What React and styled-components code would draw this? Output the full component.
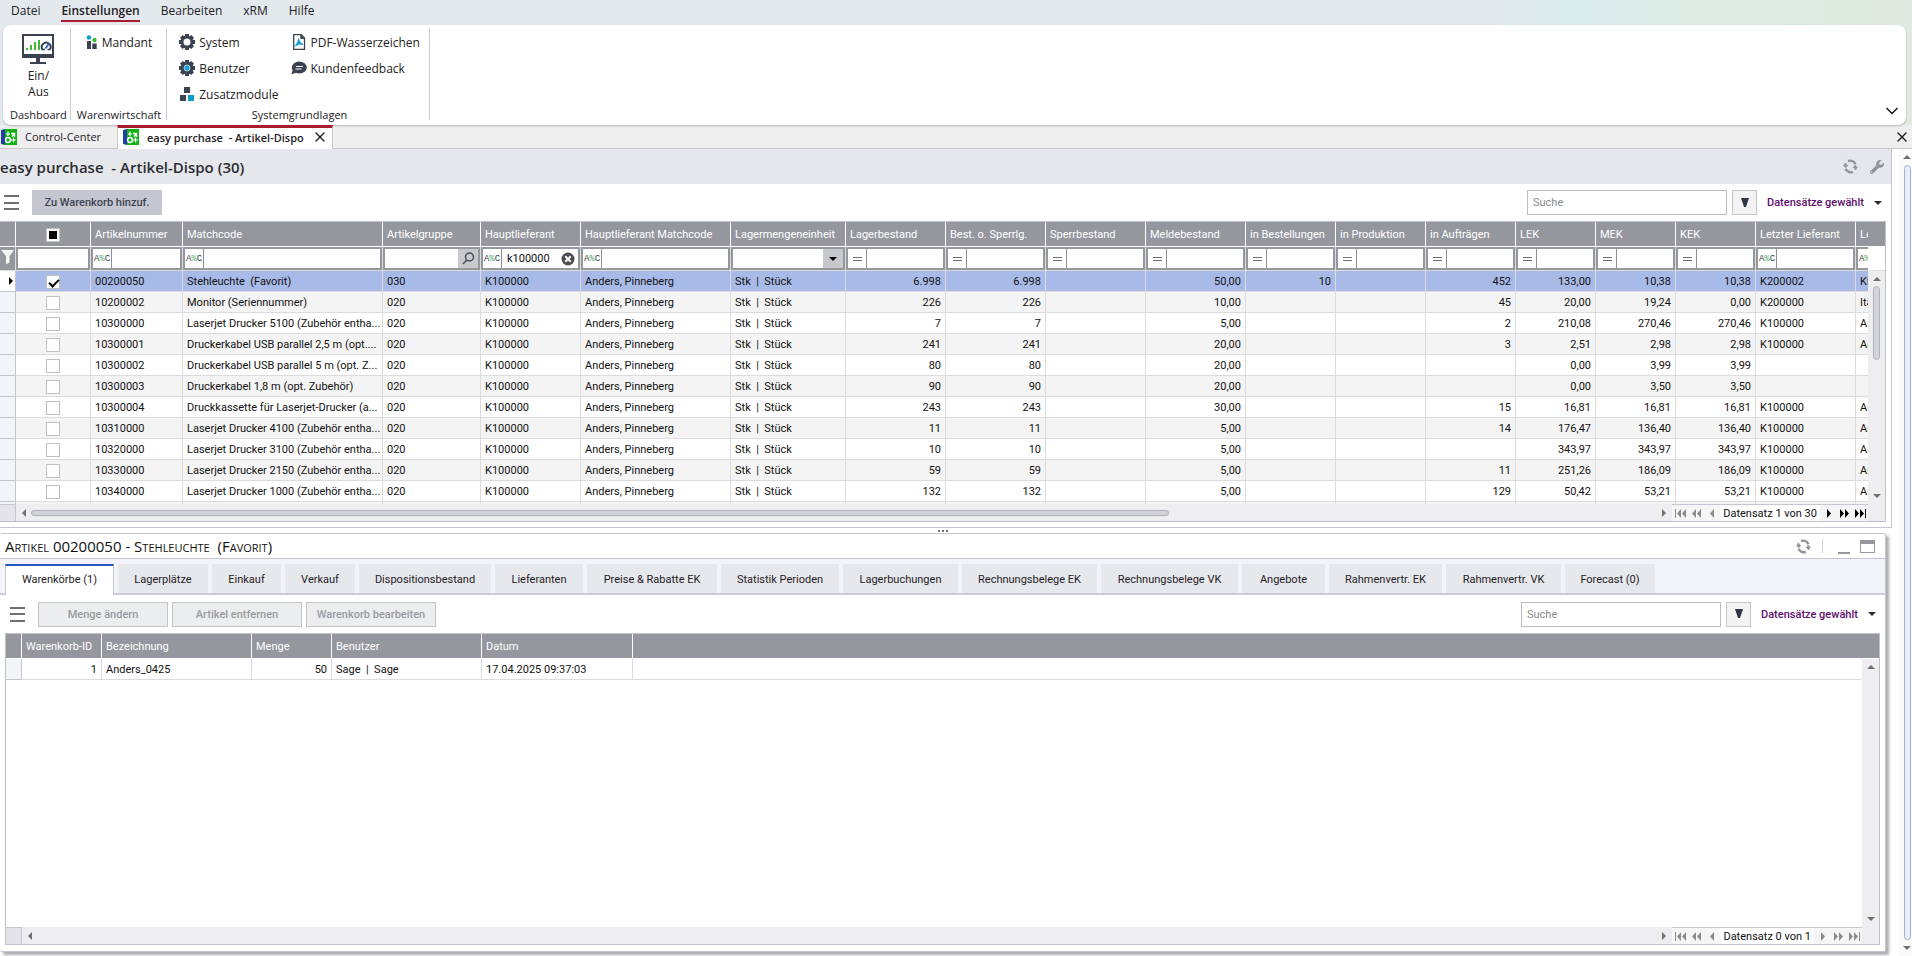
import React, { useEffect, useRef } from "react"
import styled, { createGlobalStyle, css } from "styled-components"
import { ChevronDown, X } from "lucide-react"
import { FaWrench } from "react-icons/fa"

const GlobalStyle = createGlobalStyle`
  * {
    box-sizing: border-box;
  }
  body {
    margin: 0;
    background: #ffffff;
    color: #111111;
    font-family: Roboto, "Liberation Sans", sans-serif;
    font-size: 11px;
  }
  button,
  input,
  select {
    font: inherit;
    color: inherit;
    margin: 0;
    padding: 0;
    border: none;
    border-radius: 0;
    background: transparent;
  }
`

const AppStyle = styled.div`
  display: flex;
  flex-direction: column;
  min-height: 100vh;
  overflow: hidden;
`

/* ---------- menu + ribbon ---------- */

const TopArea = styled.header`
  font-family: "Open Sans", "Noto Sans", sans-serif;
  font-size: 12px;
  color: #1e2126;
  background: linear-gradient(
    90deg,
    #e3e9ed 0%,
    #e2e9ec 78%,
    #dcedee 82%,
    #deede6 88%,
    #e0ece1 95%,
    #e1eae0 100%
  );
`

const MenuBar = styled.nav`
  display: flex;
  height: 25px;
  padding: 0 11px;
  gap: 21px;
  align-items: flex-start;
`

const MenuItem = styled.a`
  height: 22px;
  line-height: 22px;
  color: #1e2126;
  text-decoration: none;
  font-weight: ${(p) => (p.$active ? 600 : 400)};
  border-bottom: 2px solid ${(p) => (p.$active ? "#a81c30" : "transparent")};
`

const Ribbon = styled.div`
  position: relative;
  z-index: 1;
  display: flex;
  height: 100px;
  margin: 0 6px 0 3px;
  padding: 4px 0 0;
  background: #ffffff;
  border-radius: 8px;
  box-shadow: 0 1px 2px rgba(0, 0, 0, 0.25);
`

const Group = styled.section`
  display: flex;
  flex-direction: column;
  justify-content: space-between;
  height: 91px;
  padding: ${(p) => p.$pad};
  border-right: 1px solid #c9cacd;

  h2 {
    margin: 0;
    font-size: 11px;
    font-weight: 400;
    line-height: 10px;
    text-align: center;
  }
`

const GroupItems = styled.div`
  display: grid;
  grid-auto-flow: column;
  grid-template-rows: 26px 26px 26px;
  justify-content: start;
  column-gap: 12px;
`

const RibbonButton = styled.button`
  display: flex;
  align-items: center;
  gap: 4px;
  padding-left: ${(p) => p.$indent || 0}px;
  white-space: nowrap;
`

const BigButton = styled.button`
  display: flex;
  flex-direction: column;
  align-items: center;
  padding-top: 5px;
  line-height: 16px;

  svg {
    margin-bottom: 3px;
  }
`

const Collapse = styled.button`
  margin: auto 4px 4px auto;
  height: 20px;
`

/* ---------- document tabs ---------- */

const DocTabs = styled.nav`
  display: flex;
  align-items: stretch;
  height: 24px;
  background: #efefef;
  border-bottom: 1px solid #c9c9cc;
  font-family: "Open Sans", "Noto Sans", sans-serif;
  font-size: 11px;
  color: #1e2126;
`

const DocTab = styled.div`
  display: flex;
  align-items: center;
  width: ${(p) => p.$width}px;
  padding-left: ${(p) => (p.$active ? 5 : 1)}px;
  ${(p) =>
    p.$active &&
    css`
      position: relative;
      z-index: 2;
      margin-bottom: -1px;
      padding-bottom: 3px;
      background: #ffffff;
      border: 1px solid #c9c9cc;
      border-top: 3px solid #a81c30;
      border-bottom: none;
      font-weight: 600;
    `}

  > a {
    margin-left: 8px;
    color: inherit;
    text-decoration: none;
    white-space: pre;
  }
  > button {
    margin: 0 4px 0 auto;
    height: 16px;
  }
`

const CloseAll = styled.button`
  display: flex;
  align-items: center;
  margin: 0 2px 0 auto;
`

/* ---------- page ---------- */

const Page = styled.main`
  display: flex;
  flex: 1;
`

const PageContent = styled.div`
  display: flex;
  flex-direction: column;
  flex: 1;
  min-width: 0;
`

const MainPanel = styled.section`
  margin-right: 7px;
  border-right: 1px solid #c5c6d0;
  border-bottom: 1px solid #c5c6d0;
  padding-bottom: 5px;
`

const TitleBand = styled.div`
  display: flex;
  align-items: center;
  height: 35px;
  padding-right: 7px;
  gap: 12px;
  background: #e6e7eb;

  h1 {
    flex: 1;
    margin: 0;
    font-family: "Open Sans", "Noto Sans", sans-serif;
    font-size: 15px;
    font-weight: 600;
    color: #2a2d34;
    white-space: pre;
  }
`

const IconButton = styled.button`
  display: flex;
  align-items: center;
  color: #939498;
`

const Toolbar = styled.div`
  display: flex;
  align-items: center;
  height: ${(p) => p.$height}px;
  padding: 0 9px 0 ${(p) => p.$left}px;
`

const Burger = styled.button`
  width: 15px;
  height: 15px;
  margin-right: 13px;
  border-top: 2px solid #6f7074;
  border-bottom: 2px solid #6f7074;
  background: linear-gradient(#6f7074, #6f7074) center / 100% 2px no-repeat;
`

const ActionButton = styled.button`
  width: 130px;
  height: 25px;
  margin-right: 4px;
  font-weight: 500;
  white-space: nowrap;
  color: #3d4452;
  background: #c5c6d0;

  &:disabled {
    color: #9a9ba1;
    background: #ecedef;
    border: 1px solid #c5c5c9;
  }
`

const SearchInput = styled.input`
  width: 200px;
  height: 25px;
  margin-left: auto;
  padding: 0 5px;
  border: 1px solid #bdbdc0;
  background: #ffffff;

  &::placeholder {
    color: #8a8b8f;
    opacity: 1;
  }
`

const FunnelButton = styled.button`
  display: flex;
  align-items: center;
  justify-content: center;
  width: 25px;
  height: 25px;
  margin-left: 5px;
  border: 1px solid #c5c5c9;
  background: #f3f3f4;
`

const RecordsButton = styled.button`
  display: flex;
  align-items: center;
  justify-content: space-between;
  width: 115px;
  margin-left: 10px;
  font-weight: 500;
  color: #5c0f6b;
  white-space: nowrap;
`

/* ---------- grid ---------- */

const GridFrame = styled.div`
  display: flex;
  flex-direction: column;
  flex: ${(p) => (p.$grow ? 1 : "none")};
  margin: ${(p) => (p.$grow ? "0 5px 6px" : "0 5px 0 0")};
  border: 1px solid #c0c1c6;
  border-left-width: ${(p) => (p.$grow ? 1 : 0)}px;
`

const GridBody = styled.div`
  display: flex;
  flex: ${(p) => (p.$height ? "none" : 1)};
  height: ${(p) => (p.$height ? p.$height + "px" : "auto")};
  overflow: hidden;
`

const TableClip = styled.div`
  flex: 1;
  min-width: 0;
  overflow: hidden;
`

const Table = styled.table`
  table-layout: fixed;
  width: ${(p) => p.$width};
  border-collapse: separate;
  border-spacing: 0;

  th,
  td {
    padding: 1px 4px 0;
    overflow: hidden;
    text-align: left;
    white-space: pre;
    font-weight: 400;
    border-right: 1px solid #dcdcde;
    border-bottom: 1px solid #dcdcde;
  }
`

const HeadRow = styled.tr`
  height: 25px;

  th {
    color: #ffffff;
    background: #95979f;
    border-color: #ffffff;
  }
  th:last-child {
    border-right-color: ${(p) => (p.$fill ? "#95979f" : "#ffffff")};
  }
`

const FilterRow = styled.tr`
  height: 24px;

  td {
    padding: 0 2px;
    background: #95979f;
    border-color: #dcdcde;
  }
  td:first-child {
    padding: 0;
  }
`

const FilterBox = styled.div`
  display: flex;
  height: 19px;
  background: #ffffff;
  overflow: hidden;

  input,
  select {
    flex: 1;
    width: 20px;
    min-width: 0;
    padding-left: 5px;
    appearance: none;
    outline: none;
  }
`

const Operator = styled.button`
  display: flex;
  flex: none;
  align-items: center;
  justify-content: center;
  width: 19px;
  border-right: 1px solid #8d8f97;
  font-family: "Liberation Mono", monospace;
  font-size: 9px;
  color: #3f4148;

  i {
    font-style: normal;
    color: #4fae6a;
  }
`

const FieldButton = styled.button`
  display: flex;
  flex: none;
  align-items: center;
  justify-content: center;
  width: 20px;
  background: ${(p) => (p.$plain ? "#ffffff" : "#c8c9cc")};
`

const DataRow = styled.tr`
  height: 21px;

  td {
    background: ${(p) =>
      p.$selected ? "#a8bbe8" : p.$alt ? "#f4f4f4" : "#ffffff"};
  }
  td:first-child {
    background: ${(p) => (p.$selected ? "#ffffff" : "#f4f5f9")};
    border-color: #c5c6d0;
  }
  td:last-child {
    border-right-color: ${(p) => (p.$open ? "transparent" : "#dcdcde")};
  }
`

const Cell = styled.td`
  && {
    text-align: ${(p) => p.$align || "left"};
  }
`

const CheckHead = styled.th`
  && {
    text-align: center;
  }
`

const Check = styled.input`
  && {
    display: block;
    position: relative;
    appearance: none;
    width: 14px;
    height: 14px;
    margin: 0 auto;
    border: 1px solid #bfc0c4;
    background: #ffffff;
  }
  &:checked::after {
    content: "";
    position: absolute;
    left: 4px;
    top: 1px;
    width: 4px;
    height: 8px;
    border: solid #000000;
    border-width: 0 2px 2px 0;
    transform: rotate(45deg);
  }
  &:indeterminate::after {
    content: "";
    position: absolute;
    inset: 2px;
    background: #000000;
  }
`

const Gutter = styled.div`
  display: flex;
  flex-direction: column;
  width: 17px;
`

const GutterHead = styled.div`
  height: 25px;
  background: #95979f;
  border-bottom: 1px solid #ffffff;
`

const GutterFilter = styled.div`
  height: 24px;
  border-bottom: 1px solid #dcdcde;
`

const VScroll = styled.div`
  display: flex;
  flex-direction: column;
  align-items: center;
  justify-content: space-between;
  flex: 1;
  padding: 5px 0;
  background: #eeeef0;
`

const VThumb = styled.div`
  width: 7px;
  height: 74px;
  margin: 4px 0 auto;
  border: 1px solid #b0b2b9;
  border-radius: 4px;
  background: #d3d4d9;
`

const HScroll = styled.div`
  display: flex;
  align-items: center;
  height: 17px;
  background: #eeeef0;
`

const Corner = styled.div`
  align-self: stretch;
  width: 16px;
  margin-right: 5px;
  background: #e3e3e9;
  border-top: 1px solid #c5c6d0;
  border-right: 1px solid #c5c6d0;
`

const HTrack = styled.div`
  flex: 1;
  padding: 0 4px;
`

const HThumb = styled.div`
  width: 70%;
  height: 6px;
  border: 1px solid #b0b2b9;
  border-radius: 3px;
  background: #d3d4d9;
`

const Pager = styled.div`
  display: flex;
  align-items: stretch;
  align-self: stretch;
  margin: 0 17px 0 5px;
  background: #f5f5f6;
  border-top: 1px solid #c5c6d0;

  button {
    display: flex;
    align-items: center;
    justify-content: center;
    width: 16px;
    color: #000000;
  }
  button:disabled {
    color: #8a8b8f;
  }
  span {
    padding: 0 3px;
    line-height: 17px;
    background: #ffffff;
  }
`

const Splitter = styled.div`
  height: 5px;
  display: flex;
  justify-content: center;
  align-items: center;
  gap: 2px;
  padding-right: 13px;

  i {
    width: 2px;
    height: 2px;
    background: #6f7074;
  }
`

/* ---------- detail panel ---------- */

const DetailPanel = styled.section`
  display: flex;
  flex-direction: column;
  flex: 1;
  margin: 0 13px 4px 0;
  background: #ffffff;
  border: 1px solid #c5c6d0;
  border-left: none;
  border-radius: 2px;
  box-shadow: 3px 3px 3px rgba(90, 90, 100, 0.5);
`

const DetailTitle = styled.div`
  display: flex;
  align-items: center;
  height: 25px;
  padding: 0 10px 0 5px;
  border-bottom: 1px solid #c5c6d0;

  h2 {
    flex: 1;
    margin: 0;
    font-family: "Open Sans", "Noto Sans", sans-serif;
    font-size: 15px;
    line-height: 24px;
    font-weight: 400;
    font-variant: small-caps;
    white-space: pre;
  }
`

const Divider = styled.i`
  width: 1px;
  height: 14px;
  margin: 0 15px 0 11px;
  background: #d0d0d4;
`

const MinButton = styled.button`
  width: 12px;
  height: 15px;
  margin-right: 10px;
  border-bottom: 2px solid #97989c;
`

const MaxButton = styled.button`
  width: 15px;
  height: 13px;
  border: 1px solid #97989c;
  border-top-width: 4px;
`

const TabStrip = styled.div`
  display: flex;
  gap: 4px;
  height: 36px;
  padding: 5px 5px 0;
  background: #f3f4f9;
  border-bottom: 2px solid #cccdd6;
`

const Tab = styled.button`
  flex: 0 1 ${(p) => p.$width}px;
  min-width: 0;
  height: 29px;
  padding-top: 2px;
  white-space: nowrap;
  color: #1e2126;
  background: #e7e8ec;
  ${(p) =>
    p.$active &&
    css`
      height: 31px;
      padding: 0 0 2px;
      background: #ffffff;
      border-top: 2px solid #2457c5;
      border-right: 1px solid #c5c6d0;
      border-left: 1px solid #c5c6d0;
    `}
`

const PageScroll = styled.div`
  display: flex;
  flex-direction: column;
  align-items: center;
  width: 13px;
  padding: 5px 0 5px 3px;
  gap: 5px;
  background: #fafafb;

  i {
    flex: 1;
    width: 7px;
    border: 1px solid #aab0c4;
    border-radius: 4px;
    background: #e6edfc;
  }
`

/* ---------- icons ---------- */

const ARROWS = {
  up: "0,5 4,1 8,5",
  down: "0,1 8,1 4,5",
  left: "5,0 5,8 1,4",
  right: "1,0 5,4 1,8",
}

const Arrow = ({ dir, color = "#6f7074" }) => {
  const flat = dir === "up" || dir === "down"
  return (
    <svg width={flat ? 8 : 6} height={flat ? 6 : 8} aria-hidden="true">
      <polygon points={ARROWS[dir]} fill={color} />
    </svg>
  )
}

const PAGER_SHAPES = {
  first: "M0 0h1v9h-1zM6 0v9L2 4.500zM11 0v9L7 4.500z",
  fastBack: "M5 0v9L1 4.500zM10 0v9L6 4.500z",
  back: "M7 0v9L3 4.500z",
  next: "M4 0v9L8 4.500z",
  fastNext: "M1 0v9L5 4.500zM6 0v9L10 4.500z",
  last: "M0 0v9L4 4.500zM5 0v9L9 4.500zM10 0h1v9h-1z",
}

const PagerButton = ({ kind, label, disabled }) => (
  <button aria-label={label} disabled={disabled}>
    <svg width="11" height="9" fill="currentColor">
      <path d={PAGER_SHAPES[kind]} />
    </svg>
  </button>
)

const Gear = ({ user }) => (
  <svg width="16" height="16" viewBox="0 0 16 16">
    {[0, 45, 90, 135, 180, 225, 270, 315].map((a) => (
      <rect
        key={a}
        x="6"
        y="0"
        width="4"
        height="4"
        fill="#3c4350"
        transform={`rotate(${a} 8 8)`}
      />
    ))}
    <circle cx="8" cy="8" r="5" fill="#ffffff" stroke="#3c4350" strokeWidth="3" />
    {user && <circle cx="8" cy="8" r="4.500" fill="#3c4350" />}
    {user && <circle cx="8" cy="8" r="3" fill="#1aa0d8" stroke="#c9e6f4" strokeWidth="0.800" />}
  </svg>
)

const Modules = () => (
  <svg width="16" height="16" viewBox="0 0 16 16">
    <path d="M5 1h6v6H5zM1 9h6v6H1z" fill="#3c4350" />
    <path d="M9 9h6v6H9z" fill="#0a9ccc" />
  </svg>
)

const PdfIcon = () => (
  <svg width="16" height="16" viewBox="0 0 16 16">
    <path d="M2.700 .7h7.600l3.200 3.200v11.400H2.700z" fill="#fff" stroke="#3c4350" strokeWidth="1.300" />
    <path d="M9.800.7v3.700h3.700" fill="#3c4350" stroke="#3c4350" />
    <path
      d="M7.600 4.600c.2 2.500.8 4 4.300 5.800-3-.8-5-.5-7.600 1.600 2.300-2 3.200-4.200 3.300-7.400z"
      fill="#1aa0d8"
      stroke="#1aa0d8"
      strokeWidth="1.100"
    />
  </svg>
)

const Speech = () => (
  <svg width="16" height="16" viewBox="0 0 16 16">
    <ellipse cx="8.300" cy="7.500" rx="7.500" ry="6" fill="#3c4350" />
    <path d="M2.200 9L.2 14.300l6-1.800z" fill="#3c4350" />
    <path d="M5 6.500h7M4.500 9h6" stroke="#fff" strokeWidth="1.100" />
  </svg>
)

const Mandant = () => (
  <svg width="12" height="14" viewBox="0 0 12 14">
    <circle cx="3" cy="2.500" r="2.200" fill="#0a9ccc" />
    <circle cx="8.500" cy="5" r="2.200" fill="#3fb92f" />
    <path d="M1 6h4v8H1zM6.300 8.500h4.400V14H6.300z" fill="#3c4350" />
  </svg>
)

const Dashboard = () => (
  <svg width="32" height="31" viewBox="0 0 32 31">
    <path d="M0 0h32v24H0z" fill="#3c4350" />
    <path d="M2 2h28v18H2z" fill="#fff" />
    <path d="M14 24h4v4h6v2H8v-2h6z" fill="#3c4350" />
    <path d="M4 14h2v2H4zM8 11h2v5H8zM12 8h2v8h-2zM16 6h2v10h-2z" fill="#3fb92f" />
    <path d="M20.500 15.500a4.400 4.400 0 1 1 7.400 0" fill="none" stroke="#3c4350" strokeWidth="2" />
    <path d="M23.500 14.500l3.500-5" stroke="#2457c5" strokeWidth="1.600" />
    <path d="M19.500 15.500h3.500M25.500 15.500h3" stroke="#3c4350" strokeWidth="1.400" />
  </svg>
)

const AppLogo = () => (
  <svg width="16" height="16" viewBox="0 0 16 16">
    <path d="M0 1l4-1v16l-4-1z" fill="#1c3fa8" />
    <path d="M4 0h12v16H4z" fill="#12b012" />
    <circle cx="7" cy="11" r="2.400" fill="none" stroke="#fff" strokeWidth="1.500" />
    <path d="M5 5h4M7 2.500v4.500M10 11h5M12.500 8.500v5" stroke="#fff" strokeWidth="1.200" />
    <path d="M10 4.500h3.500V8M13 5l-2 2.500" fill="none" stroke="#fff" strokeWidth="1.400" />
  </svg>
)

const Refresh = () => (
  <svg width="15" height="15" viewBox="0 0 15 15" fill="none" stroke="currentColor" strokeWidth="2.400">
    <path d="M5 2a6 6 0 0 1 7.500 3.200M2.200 7a5.400 5.400 0 0 1 .8-2.600" />
    <path d="M10 13a6 6 0 0 1-7.500-3.200M12.800 8a5.400 5.400 0 0 1-.8 2.600" />
    <path d="M0 6h5.400L2.700 9.200zM15 9H9.600l2.700-3.200z" fill="currentColor" stroke="none" />
  </svg>
)

const FunnelDrop = () => (
  <svg width="10" height="10">
    <path d="M1 0h8L6 9H4z" fill="#2f3746" />
  </svg>
)

const FilterFunnel = () => (
  <svg width="14" height="15" viewBox="0 0 14 15">
    <path d="M1 0h13L9.500 6v6.500l-3.500 2V6z" fill="#f5f5f5" />
  </svg>
)

const Magnifier = () => (
  <svg width="13" height="13" fill="none" stroke="#4a4d55" strokeWidth="1.500">
    <circle cx="7.500" cy="5" r="4" />
    <path d="M4.800 8L1 12" />
  </svg>
)

const Clear = () => (
  <svg width="14" height="14">
    <circle cx="7" cy="7" r="6.500" fill="#4a4d50" />
    <path d="M4.300 4.300l5.400 5.400M9.700 4.300L4.300 9.700" stroke="#fff" strokeWidth="2" />
  </svg>
)

const Equals = () => (
  <svg width="9" height="4" shapeRendering="crispEdges">
    <path d="M0 0h9v1H0zM0 3h9v1H0z" fill="#6f7074" />
  </svg>
)

const RowMarker = () => (
  <svg width="10" height="8">
    <polygon points="5,0 9,4 5,8" fill="#000" />
  </svg>
)

/* ---------- data ---------- */

const columns = [
  { title: "Artikelnummer", width: 92, filter: "text" },
  { title: "Matchcode", width: 200, filter: "text" },
  { title: "Artikelgruppe", width: 98, filter: "lookup" },
  { title: "Hauptlieferant", width: 100, filter: "text", value: "k100000" },
  { title: "Hauptlieferant Matchcode", width: 150, filter: "text" },
  { title: "Lagermengeneinheit", width: 115, filter: "select" },
  { title: "Lagerbestand", width: 100, filter: "number" },
  { title: "Best. o. Sperrlg.", width: 100, filter: "number" },
  { title: "Sperrbestand", width: 100, filter: "number" },
  { title: "Meldebestand", width: 100, filter: "number" },
  { title: "in Bestellungen", width: 90, filter: "number" },
  { title: "in Produktion", width: 90, filter: "number" },
  { title: "in Aufträgen", width: 90, filter: "number" },
  { title: "LEK", width: 80, filter: "number" },
  { title: "MEK", width: 80, filter: "number" },
  { title: "KEK", width: 80, filter: "number" },
  { title: "Letzter Lieferant", width: 100, filter: "text" },
  { title: "Letzter Lieferant Matchcode", width: 150, filter: "text" },
]

const GRID_WIDTH = 91 + columns.reduce((sum, c) => sum + c.width, 0)

const article = (no, name, group, stock, min, ordered, sold, lek, mek, kek, last, lastName) => [
  no,
  name,
  group,
  "K100000",
  "Anders, Pinneberg",
  "Stk  |  Stück",
  stock,
  stock,
  "",
  min,
  ordered,
  "",
  sold,
  lek,
  mek,
  kek,
  last,
  lastName,
]

const A = "Anders, Pinneberg"

const articles = [
  article("00200050", "Stehleuchte  (Favorit)", "030", "6.998", "50,00", "10", "452", "133,00", "10,38", "10,38", "K200002", "Klein, Hamburg"),
  article("10200002", "Monitor (Seriennummer)", "020", "226", "10,00", "", "45", "20,00", "19,24", "0,00", "K200000", "Italo, Mailand"),
  article("10300000", "Laserjet Drucker 5100 (Zubehör entha...", "020", "7", "5,00", "", "2", "210,08", "270,46", "270,46", "K100000", A),
  article("10300001", "Druckerkabel USB parallel 2,5 m (opt....", "020", "241", "20,00", "", "3", "2,51", "2,98", "2,98", "K100000", A),
  article("10300002", "Druckerkabel USB parallel 5 m (opt. Z...", "020", "80", "20,00", "", "", "0,00", "3,99", "3,99", "", ""),
  article("10300003", "Druckerkabel 1,8 m (opt. Zubehör)", "020", "90", "20,00", "", "", "0,00", "3,50", "3,50", "", ""),
  article("10300004", "Druckkassette für Laserjet-Drucker (a...", "020", "243", "30,00", "", "15", "16,81", "16,81", "16,81", "K100000", A),
  article("10310000", "Laserjet Drucker 4100 (Zubehör entha...", "020", "11", "5,00", "", "14", "176,47", "136,40", "136,40", "K100000", A),
  article("10320000", "Laserjet Drucker 3100 (Zubehör entha...", "020", "10", "5,00", "", "", "343,97", "343,97", "343,97", "K100000", A),
  article("10330000", "Laserjet Drucker 2150 (Zubehör entha...", "020", "59", "5,00", "", "11", "251,26", "186,09", "186,09", "K100000", A),
  article("10340000", "Laserjet Drucker 1000 (Zubehör entha...", "020", "132", "5,00", "", "129", "50,42", "53,21", "53,21", "K100000", A),
]

const tabs = [
  ["Warenkörbe (1)", 109],
  ["Lagerplätze", 90],
  ["Einkauf", 69],
  ["Verkauf", 70],
  ["Dispositionsbestand", 132],
  ["Lieferanten", 88],
  ["Preise & Rabatte EK", 130],
  ["Statistik Perioden", 118],
  ["Lagerbuchungen", 115],
  ["Rechnungsbelege EK", 135],
  ["Rechnungsbelege VK", 137],
  ["Angebote", 83],
  ["Rahmenvertr. EK", 113],
  ["Rahmenvertr. VK", 115],
  ["Forecast (0)", 90],
]

/* ---------- parts ---------- */

const Filter = ({ column }) => {
  const { filter, title, value } = column
  return (
    <FilterBox>
      {filter === "text" && (
        <Operator aria-label={`Operator ${title}`}>
          A<i>%</i>C
        </Operator>
      )}
      {filter === "number" && (
        <Operator aria-label={`Operator ${title}`}>
          <Equals />
        </Operator>
      )}
      {filter === "select" ? (
        <select aria-label={`Filter ${title}`}>
          <option></option>
        </select>
      ) : (
        <input aria-label={`Filter ${title}`} defaultValue={value} />
      )}
      {filter === "lookup" && (
        <FieldButton aria-label="Nachschlagen">
          <Magnifier />
        </FieldButton>
      )}
      {filter === "select" && (
        <FieldButton as="span">
          <Arrow dir="down" color="#000" />
        </FieldButton>
      )}
      {value && (
        <FieldButton $plain aria-label="Filter löschen">
          <Clear />
        </FieldButton>
      )}
    </FilterBox>
  )
}

const GridFooter = ({ label, thumb, atEnd }) => (
  <HScroll>
    <Corner />
    <Arrow dir="left" />
    <HTrack>{thumb && <HThumb />}</HTrack>
    <Arrow dir="right" />
    <Pager>
      <PagerButton kind="first" label="Erster Datensatz" disabled />
      <PagerButton kind="fastBack" label="Seite zurück" disabled />
      <PagerButton kind="back" label="Zurück" disabled />
      <span>{label}</span>
      <PagerButton kind="next" label="Weiter" disabled={atEnd} />
      <PagerButton kind="fastNext" label="Seite weiter" disabled={atEnd} />
      <PagerButton kind="last" label="Letzter Datensatz" disabled={atEnd} />
    </Pager>
  </HScroll>
)

const SearchTools = () => (
  <>
    <SearchInput placeholder="Suche" aria-label="Suche" />
    <FunnelButton aria-label="Filter">
      <FunnelDrop />
    </FunnelButton>
    <RecordsButton>
      Datensätze gewählt
      <Arrow dir="down" color="#2a2d34" />
    </RecordsButton>
  </>
)

const ArticleGrid = () => {
  const allRef = useRef(null)

  useEffect(() => {
    allRef.current.indeterminate = true
  }, [])

  return (
    <GridFrame>
      <GridBody $height={282}>
        <TableClip>
          <Table $width={`${GRID_WIDTH}px`}>
            <colgroup>
              <col width="16" />
              <col width="75" />
              {columns.map((c) => (
                <col key={c.title} width={c.width} />
              ))}
            </colgroup>
            <thead>
              <HeadRow>
                <th></th>
                <CheckHead>
                  <Check type="checkbox" ref={allRef} aria-label="Alle auswählen" />
                </CheckHead>
                {columns.map((c) => (
                  <th key={c.title}>{c.title}</th>
                ))}
              </HeadRow>
            </thead>
            <tbody>
              <FilterRow>
                <td>
                  <FilterFunnel />
                </td>
                <td>
                  <FilterBox>
                    <input aria-label="Filter Auswahl" />
                  </FilterBox>
                </td>
                {columns.map((c) => (
                  <td key={c.title}>
                    <Filter column={c} />
                  </td>
                ))}
              </FilterRow>
              {articles.map((row, i) => (
                <DataRow key={row[0]} $selected={i === 0} $alt={i % 2 === 1}>
                  <td>{i === 0 && <RowMarker />}</td>
                  <td>
                    <Check
                      type="checkbox"
                      defaultChecked={i === 0}
                      aria-label={`Artikel ${row[0]} auswählen`}
                    />
                  </td>
                  {row.map((value, j) => (
                    <Cell
                      key={columns[j].title}
                      $align={columns[j].filter === "number" ? "right" : "left"}
                    >
                      {value}
                    </Cell>
                  ))}
                </DataRow>
              ))}
              <DataRow $alt>
                {Array.from({ length: columns.length + 2 }, (_, i) => (
                  <td key={i}></td>
                ))}
              </DataRow>
            </tbody>
          </Table>
        </TableClip>
        <Gutter>
          <GutterHead />
          <GutterFilter />
          <VScroll>
            <Arrow dir="up" />
            <VThumb />
            <Arrow dir="down" />
          </VScroll>
        </Gutter>
      </GridBody>
      <GridFooter label="Datensatz 1 von 30" thumb />
    </GridFrame>
  )
}

const BasketGrid = () => (
  <GridFrame $grow>
    <GridBody>
      <TableClip>
        <Table $width="100%">
          <colgroup>
            <col width="16" />
            <col width="80" />
            <col width="150" />
            <col width="80" />
            <col width="150" />
            <col width="151" />
            <col />
          </colgroup>
          <thead>
            <HeadRow $fill>
              <th></th>
              <th>Warenkorb-ID</th>
              <th>Bezeichnung</th>
              <th>Menge</th>
              <th>Benutzer</th>
              <th>Datum</th>
              <th></th>
            </HeadRow>
          </thead>
          <tbody>
            <DataRow $open>
              <td></td>
              <Cell $align="right">1</Cell>
              <Cell>Anders_0425</Cell>
              <Cell $align="right">50</Cell>
              <Cell>{"Sage  |  Sage"}</Cell>
              <Cell>17.04.2025 09:37:03</Cell>
              <td></td>
            </DataRow>
          </tbody>
        </Table>
      </TableClip>
      <Gutter>
        <GutterHead />
        <VScroll>
          <Arrow dir="up" />
          <Arrow dir="down" />
        </VScroll>
      </Gutter>
    </GridBody>
    <GridFooter label="Datensatz 0 von 1" atEnd />
  </GridFrame>
)

const App = () => {
  return (
    <AppStyle>
      <GlobalStyle />
      <TopArea>
        <MenuBar>
          <MenuItem href="#datei">Datei</MenuItem>
          <MenuItem href="#einstellungen" $active>
            Einstellungen
          </MenuItem>
          <MenuItem href="#bearbeiten">Bearbeiten</MenuItem>
          <MenuItem href="#xrm">xRM</MenuItem>
          <MenuItem href="#hilfe">Hilfe</MenuItem>
        </MenuBar>
        <Ribbon>
          <Group $pad="0 3px 0 7px">
            <BigButton>
              <Dashboard />
              <span>Ein/</span>
              <span>Aus</span>
            </BigButton>
            <h2>Dashboard</h2>
          </Group>
          <Group $pad="0 5px 0 6px">
            <GroupItems>
              <RibbonButton $indent={9}>
                <Mandant />
                Mandant
              </RibbonButton>
            </GroupItems>
            <h2>Warenwirtschaft</h2>
          </Group>
          <Group $pad="0 9px 0 12px">
            <GroupItems>
              <RibbonButton>
                <Gear />
                System
              </RibbonButton>
              <RibbonButton>
                <Gear user />
                Benutzer
              </RibbonButton>
              <RibbonButton>
                <Modules />
                Zusatzmodule
              </RibbonButton>
              <RibbonButton>
                <PdfIcon />
                PDF-Wasserzeichen
              </RibbonButton>
              <RibbonButton>
                <Speech />
                Kundenfeedback
              </RibbonButton>
            </GroupItems>
            <h2>Systemgrundlagen</h2>
          </Group>
          <Collapse aria-label="Menüband reduzieren">
            <ChevronDown size={20} strokeWidth={2} />
          </Collapse>
        </Ribbon>
      </TopArea>
      <DocTabs>
        <DocTab $width={117}>
          <AppLogo />
          <a href="#control-center">Control-Center</a>
        </DocTab>
        <DocTab $width={216} $active>
          <AppLogo />
          <a href="#artikel-dispo">{"easy purchase  - Artikel-Dispo"}</a>
          <button aria-label="Tab schließen">
            <X size={16} strokeWidth={2} />
          </button>
        </DocTab>
        <CloseAll aria-label="Schließen">
          <X size={16} strokeWidth={2} />
        </CloseAll>
      </DocTabs>
      <Page>
        <PageContent>
          <MainPanel>
            <TitleBand>
              <h1>{"easy purchase  - Artikel-Dispo (30)"}</h1>
              <IconButton aria-label="Aktualisieren">
                <Refresh />
              </IconButton>
              <IconButton aria-label="Einstellungen">
                <FaWrench size={14} />
              </IconButton>
            </TitleBand>
            <Toolbar $height={37} $left={4}>
              <Burger aria-label="Menü" />
              <ActionButton>Zu Warenkorb hinzuf.</ActionButton>
              <SearchTools />
            </Toolbar>
            <ArticleGrid />
          </MainPanel>
          <Splitter>
            <i />
            <i />
            <i />
          </Splitter>
          <DetailPanel>
            <DetailTitle>
              <h2>{"Artikel 00200050 - Stehleuchte  (Favorit)"}</h2>
              <IconButton aria-label="Aktualisieren">
                <Refresh />
              </IconButton>
              <Divider />
              <MinButton aria-label="Minimieren" />
              <MaxButton aria-label="Maximieren" />
            </DetailTitle>
            <TabStrip role="tablist">
              {tabs.map(([title, width], i) => (
                <Tab key={title} role="tab" $width={width} $active={i === 0}>
                  {title}
                </Tab>
              ))}
            </TabStrip>
            <Toolbar $height={38} $left={10}>
              <Burger aria-label="Menü" />
              <ActionButton disabled>Menge ändern</ActionButton>
              <ActionButton disabled>Artikel entfernen</ActionButton>
              <ActionButton disabled>Warenkorb bearbeiten</ActionButton>
              <SearchTools />
            </Toolbar>
            <BasketGrid />
          </DetailPanel>
        </PageContent>
        <PageScroll>
          <Arrow dir="up" />
          <i />
          <Arrow dir="down" />
        </PageScroll>
      </Page>
    </AppStyle>
  )
}

export default App
